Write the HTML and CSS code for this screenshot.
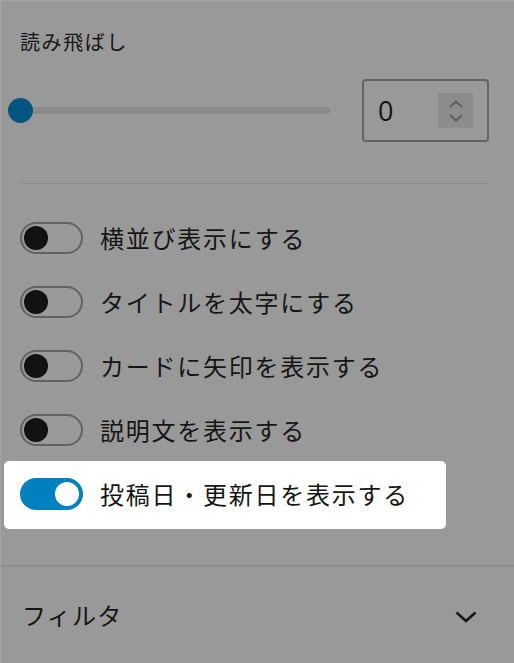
FILE: index.html
```html
<!DOCTYPE html>
<html lang="ja">
<head>
    <meta charset="UTF-8" />
    <meta name="viewport" content="width=device-width, initial-scale=1" />
    <title>表示設定</title>
    <link rel="stylesheet" href="styles.css">
</head>
<body>

    <div class="sidebar">
        <!-- 読み飛ばし -->
        <div class="section">
            <div class="section-title">読み飛ばし</div>
            <div class="range-row">
                <div class="range-track">
                    <span class="range-thumb"></span>
                </div>
                <div class="number-box">
                    <span class="number-value">0</span>
                    <span class="spin">
                        <svg width="18" height="26" viewBox="0 0 18 26">
                            <path d="M3 9 L9 3.5 L15 9" fill="none" stroke="#5c5c5c" stroke-width="1.8" />
                            <path d="M3 17 L9 22.5 L15 17" fill="none" stroke="#5c5c5c" stroke-width="1.8" />
                        </svg>
                    </span>
                </div>
            </div>
            <hr class="divider">

            <div class="toggle-list">
                <div class="toggle-row">
                    <span class="toggle"><span class="knob"></span></span>
                    <span class="toggle-label">横並び表示にする</span>
                </div>
                <div class="toggle-row">
                    <span class="toggle"><span class="knob"></span></span>
                    <span class="toggle-label">タイトルを太字にする</span>
                </div>
                <div class="toggle-row">
                    <span class="toggle"><span class="knob"></span></span>
                    <span class="toggle-label">カードに矢印を表示する</span>
                </div>
                <div class="toggle-row">
                    <span class="toggle"><span class="knob"></span></span>
                    <span class="toggle-label">説明文を表示する</span>
                </div>
                <div class="toggle-row highlight">
                    <span class="toggle on"><span class="knob"></span></span>
                    <span class="toggle-label">投稿日・更新日を表示する</span>
                </div>
            </div>
        </div>

        <!-- フィルタ -->
        <div class="panel-head">
            <span class="panel-title">フィルタ</span>
            <svg class="chevron" width="24" height="14" viewBox="0 0 24 14">
                <path d="M2.5 2.5 L12 11 L21.5 2.5" fill="none" stroke="#161616" stroke-width="2.6" />
            </svg>
        </div>
    </div>

</body>
</html>
```

FILE: styles.css
```css
* {
    margin: 0;
    padding: 0;
    box-sizing: border-box;
}
body {
    font-family: "Noto Sans CJK JP", "Noto Sans", sans-serif;
    background-color: #999999;
    color: #151515;
    height: 663px;
    overflow: hidden;
}
.sidebar {
    border-top: 1px solid #a4a4a4;
    border-left: 1px solid #a4a4a4;
    min-height: 663px;
}
.section {
    padding: 29px 24px 0 19px;
}
.section-title {
    font-size: 20px;
    letter-spacing: 1.6px;
    line-height: 24px;
    height: 24px;
}
.range-row {
    display: flex;
    align-items: center;
    margin-top: 25px;
    height: 63px;
}
.range-track {
    position: relative;
    width: 310px;
    height: 7px;
    border-radius: 4px;
    background-color: #8a8a8a;
}
.range-thumb {
    position: absolute;
    left: -12px;
    top: -9px;
    width: 25px;
    height: 25px;
    border-radius: 50%;
    background-color: #03557f;
}
.number-box {
    display: flex;
    align-items: center;
    margin-left: 32px;
    width: 127px;
    height: 63px;
    border: 2px solid #636363;
    border-radius: 4px;
    padding-left: 14px;
}
.number-value {
    font-family: "Open Sans", "Noto Sans", sans-serif;
    font-size: 27px;
    line-height: 1;
    color: #151515;
    width: 60px;
}
.spin {
    display: flex;
    align-items: center;
    justify-content: center;
    width: 35px;
    height: 35px;
    background-color: #8c8c8c;
}
.divider {
    border: none;
    border-top: 1px solid #8e8e8e;
    margin-top: 41px;
    margin-right: -1px;
}
.toggle-list {
    display: flex;
    flex-direction: column;
    gap: 32px;
    margin-top: 38px;
}
.toggle-row {
    display: flex;
    align-items: center;
    height: 32px;
}
.toggle {
    position: relative;
    display: inline-block;
    width: 63px;
    height: 32px;
    border: 2px solid #636363;
    border-radius: 16px;
    flex-shrink: 0;
}
.toggle .knob {
    position: absolute;
    left: 2px;
    top: 2px;
    width: 24px;
    height: 24px;
    border-radius: 50%;
    background-color: #121212;
}
.toggle.on {
    border-color: #0080bf;
    background-color: #0080bf;
}
.toggle.on .knob {
    left: auto;
    right: 2px;
    background-color: #ffffff;
}
.toggle-label {
    margin-left: 17px;
    font-size: 24px;
    letter-spacing: 1.75px;
    line-height: 32px;
    white-space: nowrap;
}
.highlight {
    background-color: #ffffff;
    border-radius: 5px;
    height: 68px;
    margin: -17px 0 -19px -16px;
    padding: 0 0 2px 16px;
    width: 442px;
}
.panel-head {
    display: flex;
    align-items: center;
    justify-content: space-between;
    margin-top: 55px;
    border-top: 2px solid #8c8c8c;
    height: 100px;
    padding: 0 36px 0 21px;
}
.panel-title {
    font-size: 24px;
    letter-spacing: 1.25px;
    line-height: 32px;
    margin-top: -2px;
}
.chevron {
    margin-top: 2px;
}
```
